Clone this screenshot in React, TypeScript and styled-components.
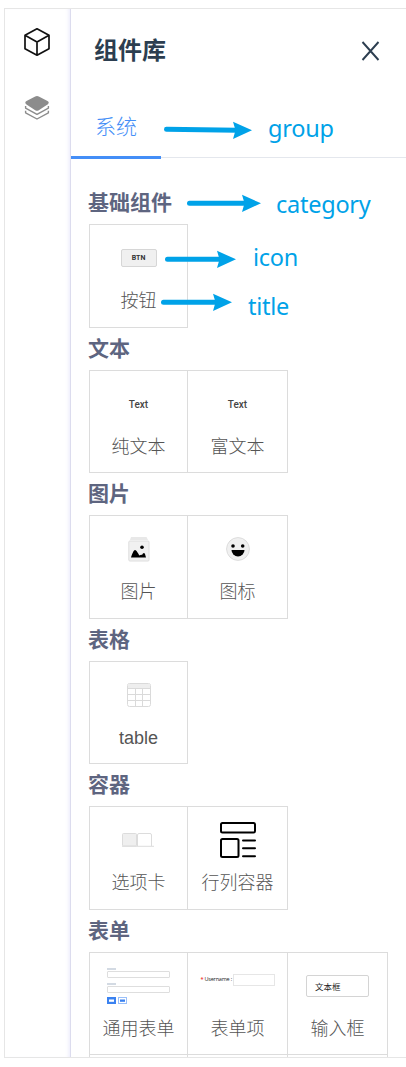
import React from 'react';
import styled, { createGlobalStyle } from 'styled-components';

const GlobalStyle = createGlobalStyle`
  * { box-sizing: border-box; }
  body {
    margin: 0;
    background: #fff;
    font-family: 'Liberation Sans', 'Noto Sans CJK SC', sans-serif;
  }
`;

const Page = styled.div`
  position: relative;
  width: 406px;
  height: 1067px;
  padding: 8px 0 9px 4px;
  overflow: hidden;
  background: #fff;
`;

const Frame = styled.div`
  display: flex;
  height: 1050px;
  border: 1px solid #e6e6e6;
  border-right: 0;
  overflow: hidden;
`;

const Rail = styled.nav`
  width: 66px;
  flex: none;
  display: flex;
  flex-direction: column;
  align-items: center;
  gap: 38px;
  padding: 18px 1px 0 0;
  border-right: 1px solid #dcdcee;
  box-shadow: inset -4px 0 4px -3px #e9e9fb;

  svg { display: block; }
`;

const Panel = styled.main`
  flex: 1;
  min-width: 0;
  display: flex;
  flex-direction: column;
`;

const Header = styled.header`
  display: flex;
  justify-content: space-between;
  align-items: center;
  height: 84px;
  padding: 0 26px 0 23px;
`;

const Title = styled.h1`
  margin: 0;
  font-size: 24px;
  line-height: 36px;
  font-weight: 700;
  color: #2c3e50;
`;

const CloseButton = styled.button`
  display: flex;
  padding: 0;
  border: 0;
  background: none;
`;

const Tabs = styled.div`
  display: flex;
  height: 65px;
  border-bottom: 1px solid #e4e7ed;
`;

const Tab = styled.div`
  flex: none;
  width: 90px;
  height: 66px;
  padding: 11px 0 0 24px;
  border-bottom: 3px solid #448ef7;
  color: #448ef7;
  font-size: 21px;
  font-weight: 300;
  line-height: 46px;
`;

const Body = styled.div`
  flex: 1;
  min-height: 0;
  padding: 24.1px 0 0 18px;
`;

const CategoryTitle = styled.h2`
  margin: 0 0 0 -1px;
  height: 42.05px;
  font-size: 21px;
  font-weight: 700;
  line-height: 42px;
  color: #5e6580;
`;

const Grid = styled.div<{ $columns: number }>`
  display: grid;
  grid-template-columns: 99px;
  grid-auto-columns: 100px;
  grid-auto-flow: column;
  width: ${p => p.$columns * 100 - 1}px;
  height: 103.5px;
`;

const Cell = styled.div<{ $first?: boolean }>`
  display: flex;
  flex-direction: column;
  align-items: center;
  border: 1px solid #dcdcdc;
  border-left-width: ${p => (p.$first ? 1 : 0)}px;
`;

const NextRow = styled(Grid)`
  height: 20px;
  & > ${Cell} { border-top: 0; }
`;

const IconBox = styled.div`
  display: flex;
  align-items: center;
  justify-content: center;
  height: 66px;
`;

const Caption = styled.div`
  margin-top: -1px;
  font-size: 18px;
  font-weight: 300;
  line-height: 22px;
  color: #555;
  white-space: nowrap;
`;

const ButtonGlyph = styled.span`
  width: 36px;
  height: 18px;
  border: 1px solid #d6d6d6;
  border-radius: 2px;
  background: #f0f0f0;
  font: 700 7px/17px Roboto, sans-serif;
  text-align: center;
  color: #333;
`;

const TextGlyph = styled.span`
  margin-top: 2px;
  font: 500 10px/14px Roboto, sans-serif;
  color: #444;
`;

const InputGlyph = styled.span`
  width: 63px;
  height: 22px;
  padding-left: 8px;
  border: 1px solid #d4d4d4;
  border-radius: 2px;
  font: 400 8.5px/21px 'Noto Sans CJK SC', sans-serif;
  color: #222;
`;

const FormItemGlyph = styled.span`
  display: flex;
  align-items: center;
  width: 74px;
  margin-bottom: 12px;
  font: 400 5.5px/11px 'Open Sans', sans-serif;
  letter-spacing: -0.2px;
  color: #222;
  white-space: nowrap;
`;
const Required = styled.b`
  width: 4px;
  color: #f04444;
  font-weight: 700;
`;
const FormItemLabel = styled.span`
  width: 28px;
`;
const FormItemField = styled.span`
  flex: 1;
  height: 12px;
  border: 1px solid #e6e6e6;
`;

const Note = styled.span<{ $x: number; $y: number }>`
  position: absolute;
  left: ${p => p.$x}px;
  top: ${p => p.$y}px;
  font: 400 23.5px/32px 'Noto Sans', sans-serif;
  letter-spacing: -0.25px;
  color: #00a2e8;
`;

const ArrowSvg = styled.svg<{ $x: number; $y: number }>`
  position: absolute;
  left: ${p => p.$x}px;
  top: ${p => p.$y}px;
`;

const Arrow = ({ x, y, length, drop = 0 }: { x: number; y: number; length: number; drop?: number }) => (
  <ArrowSvg $x={x} $y={y - 9} width={length} height="20" viewBox={`0 0 ${length} 20`}>
    <path d={`M2.5 ${9.3 - drop}L${length - 15} 9.3`} stroke="#00a2e8" strokeWidth="5" strokeLinecap="round" />
    <path d={`M${length - 19} .8L${length} 9.3L${length - 19} 18L${length - 16.5} 9.3Z`} fill="#00a2e8" />
  </ArrowSvg>
);

const CubeIcon = () => (
  <svg width="28" height="30" viewBox="0 0 28 30" fill="none" stroke="#111" strokeWidth="1.7" strokeLinejoin="round">
    <path d="M14 1.8L26 8.2V21.8L14 28.2L2 21.8V8.2ZM2 8.2L14 15L26 8.2M14 15V28" />
  </svg>
);

const LayersIcon = () => (
  <svg width="26" height="26" viewBox="0 0 26 26">
    <path d="M11.2 1.5Q13 .7 14.8 1.5L23.5 6Q26 7.6 23.5 9.4L14.8 15.2Q13 16.3 11.2 15.2L2.5 9.4Q0 7.6 2.5 6Z" fill="#8c8c8c" />
    <path d="M1.6 11V13.2L13 19.4L24.4 13.2V11M1.6 15.8V17.8L13 24L24.4 17.8V15.8" fill="none" stroke="#8c8c8c" strokeWidth="1.4" strokeLinejoin="round" />
  </svg>
);

const CloseIcon = () => (
  <svg width="19" height="20" viewBox="0 0 19 20" fill="none" stroke="#2c3e50" strokeWidth="1.9">
    <path d="M1.5 1L17.5 19M17.5 1L1.5 19" />
  </svg>
);

const PictureIcon = () => (
  <svg width="22" height="26" viewBox="0 0 22 26">
    <path d="M3 1H18.5L20 4H2Z" fill="#e8e8e8" />
    <rect x=".8" y="5" width="20.2" height="20" rx="1" fill="#f1f1f1" stroke="#dedede" />
    <circle cx="14" cy="11.3" r="1.8" />
    <path d="M3 21.5C4 18.5 5.5 14 7 14C8.8 14 10.5 18.5 11.6 19.5C12.5 18.5 13.5 18.5 14 19C15 17 16.2 16.3 17 18L18 21.5Z" />
  </svg>
);

const SmileIcon = () => (
  <svg width="24" height="24" viewBox="0 0 24 24">
    <circle cx="12" cy="12" r="11.4" fill="#f0f0f0" stroke="#dcdcdc" />
    <circle cx="7" cy="9" r="1.8" />
    <circle cx="16.7" cy="9" r="1.8" />
    <path d="M5.5 13H18.5A6.5 6.5 0 0 1 5.5 13Z" />
  </svg>
);

const TableIcon = () => (
  <svg width="24" height="24" viewBox="0 0 24 24" stroke="#dadada">
    <rect x=".5" y=".5" width="23" height="23" rx="2" fill="#fff" />
    <path d="M1 1H23V5.5H1Z" fill="#eee" stroke="none" />
    <path d="M1 5.5H23M1 11.5H23M1 17.5H23M8.5 5V23M15.5 5V23" />
  </svg>
);

const TabsIcon = () => (
  <svg width="33" height="14" viewBox="0 0 33 14" stroke="#dcdcdc">
    <rect x=".5" y=".5" width="14" height="12.5" rx="1" fill="#efefef" />
    <path d="M15.5 13V2Q15.5 .5 17 .5H28Q29.5 .5 29.5 2V13" fill="#fff" />
    <path d="M0 13.3H32" />
  </svg>
);

const LayoutIcon = () => (
  <svg width="36" height="36" viewBox="0 0 36 36" fill="none" stroke="#000" strokeWidth="2" strokeLinecap="round">
    <rect x="1" y="1" width="34" height="9.5" rx="1.5" />
    <rect x="1" y="17" width="17.5" height="18" rx="1.5" />
    <path d="M23 18.5H35M23 26.3H35M23 34.2H35" />
  </svg>
);

const FormIcon = () => (
  <svg width="63" height="36" viewBox="0 0 63 36">
    <path d="M0 0H9V2H0ZM0 15H9V17H0Z" fill="#d3dae3" />
    <rect x=".5" y="3.5" width="62" height="6" rx=".5" fill="#fff" stroke="#dedede" />
    <rect x=".5" y="18.5" width="62" height="6" rx=".5" fill="#fff" stroke="#dedede" />
    <rect x="0" y="29" width="9" height="7" fill="#3b82f0" />
    <rect x="2" y="31.5" width="5" height="2.3" fill="#fff" />
    <rect x="11.5" y="29.5" width="8" height="6" fill="#fff" stroke="#9ac0fa" />
    <rect x="13" y="31.5" width="5" height="2.3" fill="#3b82f0" />
  </svg>
);

const FormItemIcon = () => (
  <FormItemGlyph>
    <Required>*</Required>
    <FormItemLabel>Username :</FormItemLabel>
    <FormItemField />
  </FormItemGlyph>
);

type Item = { title: string; icon: React.ReactNode };
const categories: { name: string; items: Item[] }[] = [
  { name: '基础组件', items: [{ title: '按钮', icon: <ButtonGlyph>BTN</ButtonGlyph> }] },
  {
    name: '文本',
    items: [
      { title: '纯文本', icon: <TextGlyph>Text</TextGlyph> },
      { title: '富文本', icon: <TextGlyph>Text</TextGlyph> },
    ],
  },
  {
    name: '图片',
    items: [
      { title: '图片', icon: <PictureIcon /> },
      { title: '图标', icon: <SmileIcon /> },
    ],
  },
  { name: '表格', items: [{ title: 'table', icon: <TableIcon /> }] },
  {
    name: '容器',
    items: [
      { title: '选项卡', icon: <TabsIcon /> },
      { title: '行列容器', icon: <LayoutIcon /> },
    ],
  },
  {
    name: '表单',
    items: [
      { title: '通用表单', icon: <FormIcon /> },
      { title: '表单项', icon: <FormItemIcon /> },
      { title: '输入框', icon: <InputGlyph>文本框</InputGlyph> },
    ],
  },
];

export default function App() {
  return (
    <Page>
      <GlobalStyle />
      <Frame>
        <Rail>
          <CubeIcon />
          <LayersIcon />
        </Rail>
        <Panel>
          <Header>
            <Title>组件库</Title>
            <CloseButton aria-label="关闭"><CloseIcon /></CloseButton>
          </Header>
          <Tabs><Tab>系统</Tab></Tabs>
          <Body>
            {categories.map(category => (
              <section key={category.name}>
                <CategoryTitle>{category.name}</CategoryTitle>
                <Grid $columns={category.items.length}>
                  {category.items.map((item, i) => (
                    <Cell key={item.title} $first={i === 0}>
                      <IconBox>{item.icon}</IconBox>
                      <Caption>{item.title}</Caption>
                    </Cell>
                  ))}
                </Grid>
              </section>
            ))}
            <NextRow $columns={3}>
              <Cell $first />
              <Cell />
              <Cell />
            </NextRow>
          </Body>
        </Panel>
      </Frame>
      <Arrow x={164} y={130} length={88} drop={1} />
      <Note $x={268} $y={112}>group</Note>
      <Arrow x={187} y={203} length={74} />
      <Note $x={276} $y={188}>category</Note>
      <Arrow x={165} y={259} length={71} />
      <Note $x={253} $y={241}>icon</Note>
      <Arrow x={161} y={302} length={71} />
      <Note $x={248} $y={290}>title</Note>
    </Page>
  );
}
